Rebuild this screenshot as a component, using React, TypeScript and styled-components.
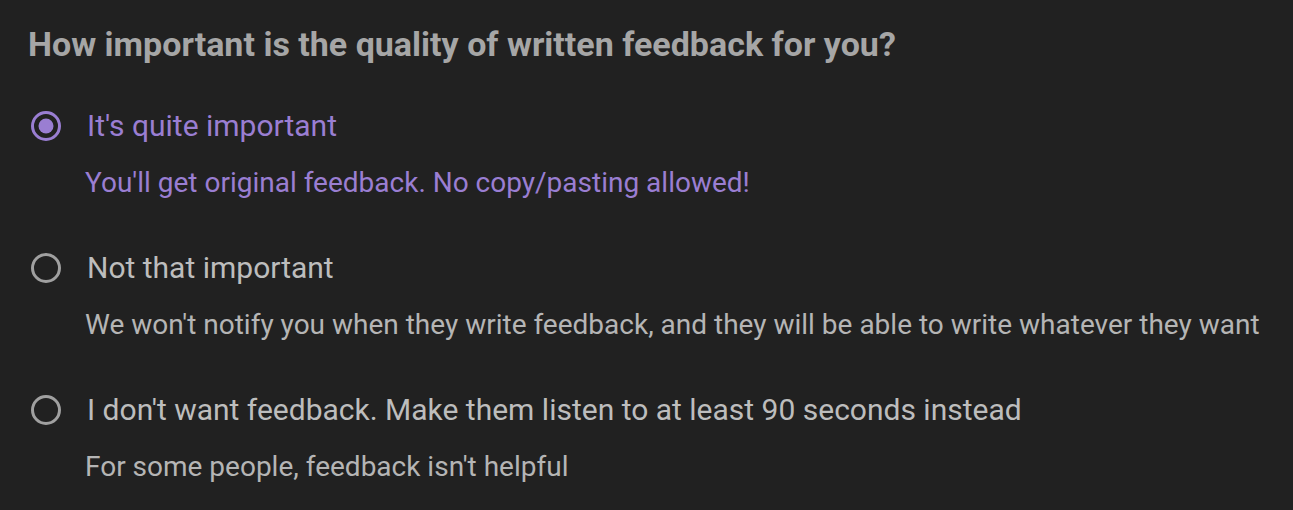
import React, { useState } from "react";
import styled, { createGlobalStyle } from "styled-components";

const Global = createGlobalStyle`
  html, body { margin: 0; padding: 0; background: #212121; }
  body { font-family: Roboto, "Liberation Sans", sans-serif; }
`;

const Page = styled.div`
  width: 1293px;
  height: 510px;
  background: #212121;
  box-sizing: border-box;
  padding: 24px 0 0 28px;
  display: flex;
  flex-direction: column;
`;

const Heading = styled.h2`
  margin: 0;
  font-size: 34px;
  line-height: 40px;
  font-weight: 700;
  color: #a6a6a6;
  white-space: nowrap;
`;

const Options = styled.div`
  display: flex;
  flex-direction: column;
  gap: 47px;
  margin-top: 42px;
`;

const Option = styled.label`
  display: flex;
  flex-direction: column;
  cursor: pointer;
`;

const Row = styled.div`
  display: flex;
  align-items: center;
  gap: 23px;
  height: 40px;
`;

const Label = styled.span<{ $active: boolean }>`
  font-size: 30px;
  line-height: 40px;
  white-space: nowrap;
  color: ${(p) => (p.$active ? "#9a7ed2" : "#bdbdbd")};
`;

const Desc = styled.div<{ $active: boolean }>`
  margin: 19px 0 0 57px;
  font-size: 28px;
  line-height: 36px;
  white-space: nowrap;
  color: ${(p) => (p.$active ? "#9a7ed2" : "#b5b5b5")};
`;

const RadioBox = styled.span`
  width: 36px;
  height: 40px;
  display: flex;
  align-items: center;
  justify-content: center;
`;

const Radio = ({ checked }: { checked: boolean }) => (
  <RadioBox>
    <svg width="40" height="40" viewBox="0 0 24 24">
      <circle
        cx="12"
        cy="12"
        r="9"
        fill="none"
        stroke={checked ? "#9a7ed2" : "#a0a0a0"}
        strokeWidth="2"
      />
      {checked && <circle cx="12" cy="12" r="5" fill="#9a7ed2" />}
    </svg>
  </RadioBox>
);

const options = [
  {
    label: "It's quite important",
    desc: "You'll get original feedback. No copy/pasting allowed!",
  },
  {
    label: "Not that important",
    desc: "We won't notify you when they write feedback, and they will be able to write whatever they want",
  },
  {
    label: "I don't want feedback. Make them listen to at least 90 seconds instead",
    desc: "For some people, feedback isn't helpful",
  },
];

export default function App() {
  const [selected, setSelected] = useState(0);
  return (
    <>
      <Global />
      <Page>
        <Heading>How important is the quality of written feedback for you?</Heading>
        <Options>
          {options.map((o, i) => (
            <Option key={i} onClick={() => setSelected(i)}>
              <Row>
                <Radio checked={selected === i} />
                <Label $active={selected === i}>{o.label}</Label>
              </Row>
              <Desc $active={selected === i}>{o.desc}</Desc>
            </Option>
          ))}
        </Options>
      </Page>
    </>
  );
}
